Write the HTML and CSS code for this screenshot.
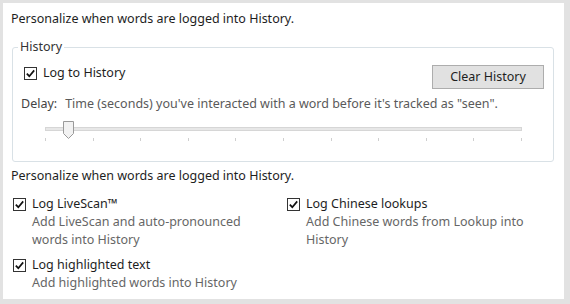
FILE: index.html
```html
<!DOCTYPE html>
<html lang="en">
<head>
  <meta charset="UTF-8">
  <title>History Settings</title>
  <link rel="stylesheet" href="styles.css">
</head>
<body>
  <div class="panel">
    <p class="intro">Personalize when words are logged into History.</p>

    <fieldset class="group">
      <legend>History</legend>
      <div class="group-row">
        <label class="check">
          <svg class="box" width="13" height="13" viewBox="0 0 13 13">
            <rect x="0.5" y="0.5" width="12" height="12" fill="#fff" stroke="#333"></rect>
            <path d="M2.8 6.6 L5.3 9.2 L10.2 3.4" fill="none" stroke="#111" stroke-width="1.7"></path>
          </svg>
          Log to History
        </label>
        <button class="btn">Clear History</button>
      </div>

      <p class="delay"><span class="delay-label">Delay:</span>Time (seconds) you've interacted with a word before it's tracked as "seen".</p>

      <div class="slider">
        <div class="track"></div>
        <svg class="thumb" width="11" height="18" viewBox="0 0 11 18">
          <path d="M0.5 0.5 H10.5 V12.5 L5.5 17.5 L0.5 12.5 Z" fill="#f2f2f2" stroke="#9a9a9a"></path>
        </svg>
        <div class="ticks">
          <span></span><span></span><span></span><span></span><span></span><span></span>
          <span></span><span></span><span></span><span></span><span></span>
        </div>
      </div>
    </fieldset>

    <p class="intro second">Personalize when words are logged into History.</p>

    <div class="options">
      <div class="option">
        <label class="check">
          <svg class="box" width="13" height="13" viewBox="0 0 13 13">
            <rect x="0.5" y="0.5" width="12" height="12" fill="#fff" stroke="#333"></rect>
            <path d="M2.8 6.6 L5.3 9.2 L10.2 3.4" fill="none" stroke="#111" stroke-width="1.7"></path>
          </svg>
          Log LiveScan™
        </label>
        <p class="desc">Add LiveScan and auto-pronounced words into History</p>
      </div>

      <div class="option">
        <label class="check">
          <svg class="box" width="13" height="13" viewBox="0 0 13 13">
            <rect x="0.5" y="0.5" width="12" height="12" fill="#fff" stroke="#333"></rect>
            <path d="M2.8 6.6 L5.3 9.2 L10.2 3.4" fill="none" stroke="#111" stroke-width="1.7"></path>
          </svg>
          Log Chinese lookups
        </label>
        <p class="desc">Add Chinese words from Lookup into History</p>
      </div>

      <div class="option">
        <label class="check">
          <svg class="box" width="13" height="13" viewBox="0 0 13 13">
            <rect x="0.5" y="0.5" width="12" height="12" fill="#fff" stroke="#333"></rect>
            <path d="M2.8 6.6 L5.3 9.2 L10.2 3.4" fill="none" stroke="#111" stroke-width="1.7"></path>
          </svg>
          Log highlighted text
        </label>
        <p class="desc">Add highlighted words into History</p>
      </div>
    </div>
  </div>
</body>
</html>
```

FILE: styles.css
```css
* {
  margin: 0;
  padding: 0;
  box-sizing: border-box;
}

body {
  font-family: 'Noto Sans', sans-serif;
  font-size: 12.5px;
  line-height: 18px;
  color: #1e1e1e;
  background: #e2e2e2;
  padding: 3px 6px 5px 3px;
  height: 304px;
}

.panel {
  background: #fff;
  height: 296px;
  padding: 7px 10px 0 8px;
}

.group {
  margin: 10px 0 0 1px;
  padding: 0 11px 20px;
  border: 1px solid #d9e1e6;
  border-radius: 3px;
}

.group legend {
  padding: 0 2px;
  margin-left: -6px;
  color: #333;
}

.group-row {
  display: flex;
  justify-content: space-between;
  align-items: flex-start;
  padding-top: 8px;
}

.check {
  display: flex;
  align-items: center;
  gap: 6px;
}

.check .box {
  flex: none;
}

.btn {
  font: inherit;
  color: #1e1e1e;
  width: 112px;
  height: 24px;
  margin: 1px -2px 0 0;
  background: #e1e1e1;
  border: 1px solid #adadad;
}

.delay {
  margin: 6px 0 0 -3px;
  color: #5a5a5a;
}

.delay-label {
  color: #444;
  margin-right: 8px;
}

.slider {
  position: relative;
  margin: 14px 20px 0 21px;
}

.track {
  height: 4px;
  background: #e7e7e7;
  border: 1px solid #d6d6d6;
}

.thumb {
  position: absolute;
  left: 18px;
  top: -6px;
}

.ticks {
  display: flex;
  justify-content: space-between;
  margin-top: 7px;
}

.ticks span {
  width: 1px;
  height: 3px;
  background: #cfcfcf;
}

.second {
  margin-top: 5px;
}

.options {
  display: grid;
  grid-template-columns: 274px 1fr;
  row-gap: 7px;
  margin: 10px 0 0 2px;
}

.desc {
  padding-left: 19px;
  max-width: 250px;
  color: #666;
}
```
